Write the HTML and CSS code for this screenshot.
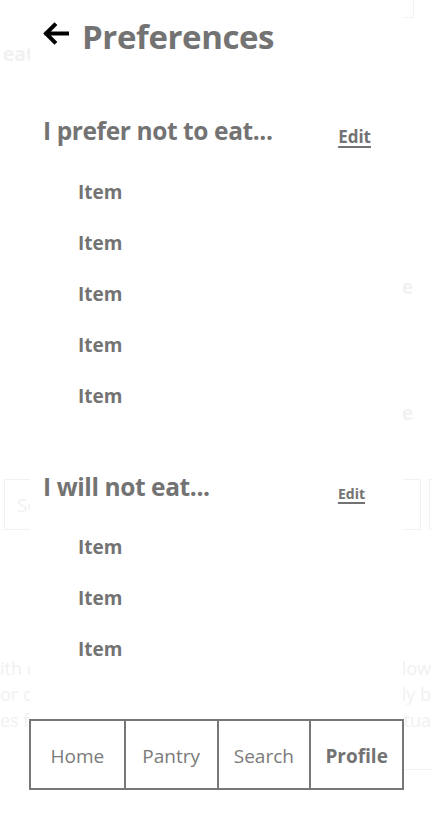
FILE: index.html
```html
<!DOCTYPE html>
<html lang="en">
<head>
<meta charset="utf-8">
<title>Preferences</title>
<link rel="stylesheet" href="styles.css">
</head>
<body>
<div class="page">
  <div class="bg-top"><div class="bg-search"></div></div>
  <div class="bg-title">eat</div>
  <div class="bg-line bg-line-a">se</div>
  <div class="bg-line bg-line-b">e</div>
  <div class="bg-row">
    <div class="bg-box"><span>Se</span><span>e</span></div>
    <div class="bg-box2"></div>
  </div>
  <div class="bg-para">
    <p>ith e<span>llow</span></p>
    <p>or o<span>ly b</span></p>
    <p>es fo<span>ctua</span></p>
  </div>
  <div class="bg-rule"></div>
</div>

<div class="sheet">
  <header class="header">
    <svg class="back" width="27" height="23" viewBox="0 0 27 23" aria-hidden="true">
      <path d="M25 11.5H4.5 M12.5 3L4 11.5L12.5 20" fill="none" stroke="#000" stroke-width="4" stroke-linecap="square" stroke-linejoin="miter"/>
    </svg>
    <h1 class="title">Preferences</h1>
  </header>

  <section class="section first">
    <div class="section-head">
      <h2 class="section-title">I prefer not to eat...</h2>
      <a class="edit edit-lg" href="#">Edit</a>
    </div>
    <ul class="items">
      <li>Item</li>
      <li>Item</li>
      <li>Item</li>
      <li>Item</li>
      <li>Item</li>
    </ul>
  </section>

  <section class="section second">
    <div class="section-head">
      <h2 class="section-title">I will not eat...</h2>
      <a class="edit edit-sm" href="#">Edit</a>
    </div>
    <ul class="items">
      <li>Item</li>
      <li>Item</li>
      <li>Item</li>
    </ul>
  </section>

  <nav class="nav">
    <a class="nav-item" href="#">Home</a>
    <a class="nav-item" href="#">Pantry</a>
    <a class="nav-item" href="#">Search</a>
    <a class="nav-item active" href="#">Profile</a>
  </nav>
</div>
</body>
</html>
```

FILE: styles.css
```css
* { box-sizing: border-box; }

html, body {
  margin: 0;
  padding: 0;
  background: #fff;
}

body {
  width: 433px;
  height: 823px;
  overflow: hidden;
  font-family: "Open Sans", "Noto Sans", sans-serif;
  position: relative;
}

/* faint page behind the sheet */
.page {
  color: #f1f1f1;
  display: flex;
  flex-direction: column;
}

.bg-top {
  display: flex;
  justify-content: flex-end;
  padding-right: 19px;
}

.bg-search {
  width: 160px;
  height: 18px;
  border: 1px solid #f1f1f1;
  border-top: none;
}

.bg-title {
  margin-top: 24px;
  padding-left: 3px;
  font-size: 19px;
  font-weight: 700;
  line-height: 24px;
}

.bg-line {
  font-size: 19px;
  font-weight: 700;
  line-height: 24px;
  text-align: right;
  padding-right: 20px;
}

.bg-line-a { margin-top: 209px; }
.bg-line-b { margin-top: 102px; }

.bg-row {
  display: flex;
  gap: 8px;
  margin-top: 54px;
  padding-left: 4px;
}

.bg-box {
  width: 417px;
  flex: none;
  height: 51px;
  border: 1px solid #f1f1f1;
  display: flex;
  justify-content: space-between;
  align-items: center;
  padding: 0 16px 0 12px;
  font-size: 19px;
}

.bg-box2 {
  width: 20px;
  flex: none;
  height: 51px;
  border: 1px solid #f1f1f1;
}

.bg-para {
  margin-top: 125px;
  font-size: 18px;
  line-height: 26px;
}

.bg-para p {
  margin: 0;
  display: flex;
  justify-content: space-between;
  padding-right: 2px;
}

.bg-rule {
  margin-top: 36px;
  margin-left: 400px;
  height: 1px;
  background: #f1f1f1;
}

/* the sheet on top */
.sheet {
  position: absolute;
  top: 0;
  left: 30px;
  width: 373px;
  height: 823px;
  background: #fff;
  padding: 0 0 0 12px;
  display: flex;
  flex-direction: column;
}

.header {
  display: flex;
  align-items: center;
  gap: 13px;
  height: 72px;
}

.back {
  flex: none;
  display: block;
  margin-top: -6px;
}

.title {
  margin: 0;
  font-size: 33px;
  font-weight: 700;
  letter-spacing: -0.4px;
  color: #737373;
  line-height: 1;
}

.section-head {
  display: flex;
  justify-content: space-between;
  align-items: flex-end;
  padding-left: 1px;
}

.first .section-head { padding-right: 32px; margin-top: 43px; }
.second .section-head { padding-right: 38px; margin-top: 49px; }

.section-title {
  margin: 0;
  font-size: 24.5px;
  line-height: 32px;
  font-weight: 700;
  letter-spacing: -0.4px;
  color: #737373;
}

.edit {
  color: #737373;
  font-weight: 700;
  text-decoration: underline;
  text-decoration-thickness: 2px;
  text-underline-offset: 3px;
  line-height: 20px;
}

.edit-lg { font-size: 17px; }
.edit-sm { font-size: 14px; line-height: 19px; }

.items {
  list-style: none;
  margin: 0;
  padding: 0 0 0 36px;
}

.items li {
  font-size: 19px;
  font-weight: 700;
  line-height: 51px;
  color: #737373;
}

.first .items { margin-top: 20px; }
.second .items { margin-top: 19px; }

.nav {
  position: absolute;
  left: -1px;
  top: 719px;
  width: 375px;
  height: 71px;
  display: grid;
  grid-template-columns: repeat(4, 1fr);
  border: 2px solid #777;
  background: #fff;
}

.nav-item {
  display: flex;
  align-items: center;
  justify-content: center;
  font-size: 19px;
  color: #7a7a7a;
  text-decoration: none;
  border-left: 2px solid #777;
  padding-top: 2px;
}

.nav-item:first-child { border-left: none; }

.nav-item.active {
  font-weight: 700;
  color: #737373;
}
```
